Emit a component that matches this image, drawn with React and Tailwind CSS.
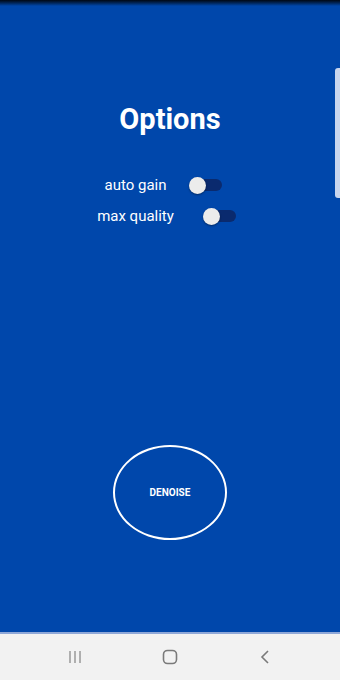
import React from "react";

function Toggle() {
  return (
    <div className="relative w-[33px] h-[17px] flex items-center">
      <div className="absolute left-[6px] right-0 h-[12px] rounded-full bg-[#0a2a6e]" />
      <div className="absolute left-0 w-[17px] h-[17px] rounded-full bg-[#ececec] shadow-[0_1px_2px_rgba(0,0,0,0.4)]" />
    </div>
  );
}

export default function App() {
  return (
    <div className="w-[340px] h-[680px] flex flex-col bg-[#0047ab] font-['Roboto',sans-serif] overflow-hidden relative">
      <div className="h-[6px] bg-gradient-to-b from-[#000814] to-[#0047ab]" />
      <div className="flex-1 flex flex-col items-center relative">
        <div className="absolute right-0 top-[62px] w-[5px] h-[130px] rounded-l-[3px] bg-[#c9d6ee]" />
        <h1 className="mt-[97px] text-white font-bold text-[29px] leading-[32px]">Options</h1>
        <div className="mt-[41px] mr-[13px] flex flex-col items-center gap-[13px]">
          <div className="flex items-center gap-[23px]">
            <span className="text-white text-[15px] leading-[18px]">auto gain</span>
            <Toggle />
          </div>
          <div className="ml-[6px] flex items-center gap-[29px]">
            <span className="text-white text-[15px] leading-[18px]">max quality</span>
            <Toggle />
          </div>
        </div>
        <div className="mt-[220px] w-[114px] h-[95px] rounded-[50%] border-2 border-white flex items-center justify-center">
          <span className="text-white font-bold text-[10px]">DENOISE</span>
        </div>
      </div>
      <div className="h-[2px] bg-[#8fa8d8]" />
      <div className="h-[46px] bg-[#f2f2f2] flex items-center justify-center gap-[65px]">
        <div className="w-[30px] flex justify-center">
          <svg width="16" height="14" viewBox="0 0 16 14" className="text-[#999]">
            <path d="M3 1v12M8 1v12M13 1v12" stroke="currentColor" strokeWidth="1.5" fill="none" />
          </svg>
        </div>
        <div className="w-[30px] flex justify-center">
          <svg width="16" height="16" viewBox="0 0 16 16" className="text-[#7a7a7a]">
            <rect x="1.5" y="1.5" width="13" height="13" rx="4" stroke="currentColor" strokeWidth="1.6" fill="none" />
          </svg>
        </div>
        <div className="w-[30px] flex justify-center">
          <svg width="12" height="16" viewBox="0 0 12 16" className="text-[#7a7a7a]">
            <path d="M9 2L3 8l6 6" stroke="currentColor" strokeWidth="1.6" fill="none" />
          </svg>
        </div>
      </div>
    </div>
  );
}
